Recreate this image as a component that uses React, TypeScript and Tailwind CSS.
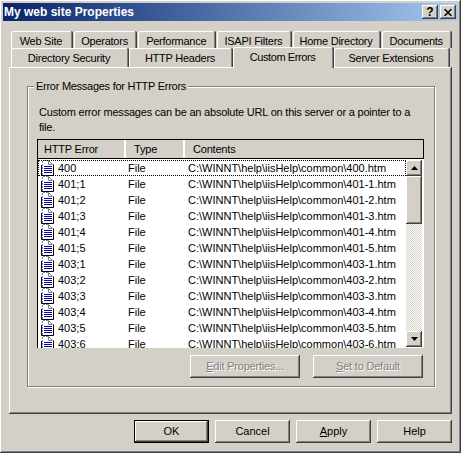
import React from 'react';

const raised = 'shadow-[inset_-1px_-1px_#404040,inset_1px_1px_#ffffff,inset_-2px_-2px_#808080]';

const firstTabs = [
  { name: 'Web Site', width: 'w-[62px]' },
  { name: 'Operators', width: 'w-[64px]' },
  { name: 'Performance', width: 'w-[78px]' },
  { name: 'ISAPI Filters', width: 'w-[75px]' },
  { name: 'Home Directory', width: 'w-[89px]' },
  { name: 'Documents', width: 'w-[70px]' },
];

const secondTabs = [
  { name: 'Directory Security', width: 'w-[118px]' },
  { name: 'HTTP Headers', width: 'w-[104px]' },
];

const errors = ['400', '401;1', '401;2', '401;3', '401;4', '401;5', '403;1', '403;2', '403;3', '403;4', '403;5', '403;6'];

// the little document glyph in front of each row
const DocIcon = () => (
  <svg width="13" height="16" viewBox="0 0 13 16" className="shrink-0">
    <path d="M1.5 15.5V0.5H7.5L11.5 4.5V15.5Z" fill="#ffffff" />
    <path d="M1.5 15V0.5H7.5" fill="none" stroke="#808080" strokeDasharray="2 1" />
    <path d="M7.5 0.5V4.5H11.5L7.5 0.5" fill="#ffffff" stroke="#808080" />
    <path d="M0.5 5V15.5H12.5V4.5" stroke="#000000" fill="none" />
    <path d="M3 6.5H11M3 8.5H11M3 10.5H11M3 12.5H11" stroke="#0000b0" fill="none" />
  </svg>
);

const Tab: React.FC<{ name: string; width: string }> = ({ name, width }) => (
  <div className={`${width} h-full pt-[3px] pr-[2px] flex justify-center whitespace-nowrap tracking-[-0.25px] rounded-t-[2px] shadow-[inset_-1px_0_#404040,inset_1px_1px_#ffffff,inset_-2px_0_#808080]`}>
    {name}
  </div>
);

const Arrow: React.FC<{ down?: boolean }> = ({ down }) => (
  <div className={`w-[16px] h-[16px] flex items-center justify-center bg-[#d4d0c8] ${raised}`}>
    <svg width="7" height="4" viewBox="0 0 7 4">
      <path d={down ? 'M0 0H7L3.5 4Z' : 'M0 4H7L3.5 0Z'} fill="#000000" />
    </svg>
  </div>
);

const DialogButton: React.FC<{ children: React.ReactNode; isDefault?: boolean }> = ({ children, isDefault }) => (
  <button className={`w-[75px] h-[23px] flex items-center justify-center ${isDefault ? 'border border-black shadow-[inset_-1px_-1px_#404040,inset_1px_1px_#ffffff,inset_-2px_-2px_#808080]' : raised}`}>
    <span>{children}</span>
  </button>
);

const DisabledButton: React.FC<{ children: React.ReactNode }> = ({ children }) => (
  <button disabled className={`w-[110px] h-[23px] flex items-center justify-center text-[#808080] tracking-[-0.2px] [text-shadow:1px_1px_#ffffff] ${raised}`}>
    <span>{children}</span>
  </button>
);

export default function App() {
  return (
    <div className={`w-[461px] h-[453px] p-[3px] bg-[#d4d0c8] text-black text-[11px] leading-[15px] font-['Liberation_Sans',sans-serif] overflow-hidden ${raised}`}>
      {/* Title bar */}
      <div className="h-[18px] flex items-center justify-between pl-[1px] pr-[2px] bg-gradient-to-r from-[#0a246a] to-[#a6caf0]">
        <span className="text-white font-bold text-[12px]">My web site Properties</span>
        <div className="flex gap-[2px]">
          <div className={`w-[16px] h-[14px] flex items-center justify-center bg-[#d4d0c8] font-bold text-[12px] ${raised}`}>?</div>
          <div className={`w-[16px] h-[14px] flex items-center justify-center bg-[#d4d0c8] ${raised}`}>
            <svg width="8" height="7" viewBox="0 0 8 7">
              <path d="M0.5 0L7.5 7M7.5 0L0.5 7" stroke="#000000" strokeWidth="1.5" />
            </svg>
          </div>
        </div>
      </div>

      <div className="mx-[6px] mt-[10px]">
        {/* Tabs */}
        <div className="h-[17px] pl-[2px] flex gap-[1px]">
          {firstTabs.map((t) => (
            <Tab key={t.name} name={t.name} width={t.width} />
          ))}
        </div>
        <div className="h-[19px] pl-[2px] flex items-end">
          {secondTabs.map((t) => (
            <Tab key={t.name} name={t.name} width={t.width} />
          ))}
          <div className="relative z-10 w-[101px] h-[21px] -mb-[1px] pt-[3px] pr-[2px] flex justify-center tracking-[-0.4px] bg-[#d4d0c8] rounded-t-[2px] shadow-[inset_-1px_0_#404040,inset_1px_1px_#ffffff,inset_-2px_0_#808080]">
            Custom Errors
          </div>
          <Tab name="Server Extensions" width="w-[116px]" />
        </div>

        {/* Tab page */}
        <div className={`h-[347px] pt-[19px] pl-[18px] pr-[17px] ${raised}`}>
          <div className="h-[301px] border border-[#808080] shadow-[inset_1px_1px_#ffffff,1px_1px_#ffffff] pl-[9px]">
            <div className="w-fit -mt-[8px] -ml-[3px] px-[2px] bg-[#d4d0c8] h-[15px] tracking-[-0.27px]">Error Messages for HTTP Errors</div>

            <p className="mt-[11px] pl-[2px] whitespace-nowrap tracking-[-0.21px]">
              Custom error messages can be an absolute URL on this server or a pointer to a
              <br />
              file.
            </p>

            {/* List view */}
            <div className="mt-[4px] w-[387px] h-[209px] bg-white overflow-hidden border-l border-black shadow-[inset_-1px_-1px_#ffffff]">
              <div className="h-[20px] flex bg-[#d4d0c8] border-t border-r border-b border-black tracking-[-0.2px]">
                <div className="w-[88px] pl-[6px] flex items-center shadow-[inset_-2px_0_#ffffff,inset_-1px_0_#808080]">HTTP Error</div>
                <div className="w-[59px] pl-[8px] flex items-center shadow-[inset_-2px_0_#ffffff,inset_-1px_0_#808080]">Type</div>
                <div className="flex-1 pl-[8px] flex items-center">Contents</div>
              </div>
              <div className="flex pt-[1px] pr-[1px]">
                <div className="w-[368px] h-[188px] overflow-hidden">
                  {errors.map((code, i) => (
                    <div key={code} className={`h-[16px] flex items-center pl-[3px] whitespace-nowrap ${i === 0 ? 'outline-1 -outline-offset-1 outline-dotted outline-black' : ''}`}>
                      <DocIcon />
                      <span className="w-[74px] pl-[4px]">{code}</span>
                      <span className="w-[60px]">File</span>
                      <span>{`C:\\WINNT\\help\\iisHelp\\common\\${code.replace(';', '-')}.htm`}</span>
                    </div>
                  ))}
                </div>
                {/* Scrollbar */}
                <div className="w-[16px] h-[187px] flex flex-col bg-[repeating-conic-gradient(#ffffff_0_25%,#d4d0c8_0_50%)] bg-[length:2px_2px]">
                  <Arrow />
                  <div className={`h-[48px] bg-[#d4d0c8] ${raised}`} />
                  <div className="flex-1" />
                  <Arrow down />
                </div>
              </div>
            </div>

            <div className="mt-[7px] w-[386px] flex justify-end gap-[13px]">
              <DisabledButton><u>E</u>dit Properties...</DisabledButton>
              <DisabledButton><u>S</u>et to Default</DisabledButton>
            </div>
          </div>
        </div>

        {/* Dialog buttons */}
        <div className="mt-[6px] flex justify-end gap-[6px]">
          <DialogButton isDefault>OK</DialogButton>
          <DialogButton>Cancel</DialogButton>
          <DialogButton><u>A</u>pply</DialogButton>
          <DialogButton>Help</DialogButton>
        </div>
      </div>
    </div>
  );
}
